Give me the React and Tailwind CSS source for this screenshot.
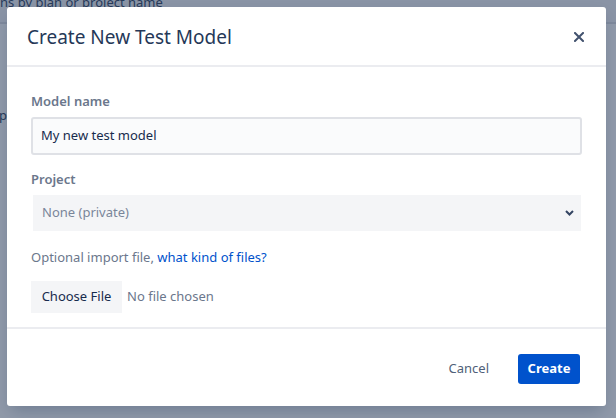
import React from "react";

export default function App() {
  const font = { fontFamily: '"Noto Sans", "Open Sans", sans-serif' };
  return (
    <div className="relative w-[616px] h-[418px] overflow-hidden bg-white" style={font}>
      {/* page behind */}
      <div className="flex flex-col">
        <div className="h-[27px] bg-[#f4f5f7] pt-[1px] text-[13px] leading-[13px] text-[#42526e] -mt-[5px] whitespace-nowrap">ns by plan or project name</div>
        <div className="h-[2px] bg-[#dfe1e6]"></div>
        <div className="h-[82px]"></div>
        <div className="text-[13px] text-[#42526e] -ml-[1px] whitespace-nowrap">p</div>
      </div>
      {/* blanket */}
      <div className="absolute inset-0 bg-[rgba(9,30,66,0.45)]"></div>
      {/* modal */}
      <div className="absolute left-[7px] top-[7px] w-[599px] h-[399px] bg-white rounded-[3px] shadow-[0_8px_16px_-4px_rgba(9,30,66,0.25)] flex flex-col">
        <div className="h-[60px] flex items-center justify-between pl-[20px] pr-[22px] border-b-2 border-[#ebecf0]">
          <h1 className="text-[19px] text-[#253858] leading-[24px] mt-[2px]">Create New Test Model</h1>
          <svg width="10" height="10" viewBox="0 0 10 10" className="mt-[2px]">
            <path d="M1 1L9 9M9 1L1 9" stroke="#42526e" strokeWidth="2" strokeLinecap="square" />
          </svg>
        </div>
        <div className="flex flex-col px-[24px] pt-[26px] flex-1">
          <label className="text-[13px] font-semibold text-[#6b778c] leading-[16px]">Model name</label>
          <div className="mt-[8px] h-[38px] w-[551px] border-2 border-[#dfe1e6] bg-[#fafbfc] rounded-[3px] flex items-center px-[8px] text-[13px] text-[#172b4d]">My new test model</div>
          <label className="mt-[16px] text-[13px] font-semibold text-[#6b778c] leading-[16px]">Project</label>
          <div className="mt-[8px] ml-[2px] h-[36px] w-[548px] bg-[#f4f5f7] flex items-center justify-between pl-[9px] pr-[7px] text-[13px] text-[#7a869a]">
            <span>None (private)</span>
            <svg width="9" height="6" viewBox="0 0 9 6">
              <path d="M1 1L4.5 4.5L8 1" stroke="#344563" strokeWidth="2" fill="none" />
            </svg>
          </div>
          <div className="mt-[17px] text-[13px] text-[#6b778c] leading-[18px]">
            Optional import file, <span className="text-[#0052cc]">what kind of files?</span>
          </div>
          <div className="mt-[15px] flex items-center gap-[5px] text-[13px]">
            <div className="h-[32px] w-[91px] bg-[#f4f5f7] flex items-center justify-center text-[#172b4d]">Choose File</div>
            <span className="text-[#6b778c]">No file chosen</span>
          </div>
        </div>
        <div className="h-[79px] border-t-2 border-[#ebecf0] flex items-center justify-end pr-[26px] pt-[2px]">
          <span className="text-[13px] text-[#505f79] mr-[29px]">Cancel</span>
          <div className="h-[30px] w-[62px] bg-[#0052cc] rounded-[3px] flex items-center justify-center text-[13px] font-bold text-white">Create</div>
        </div>
      </div>
    </div>
  );
}
